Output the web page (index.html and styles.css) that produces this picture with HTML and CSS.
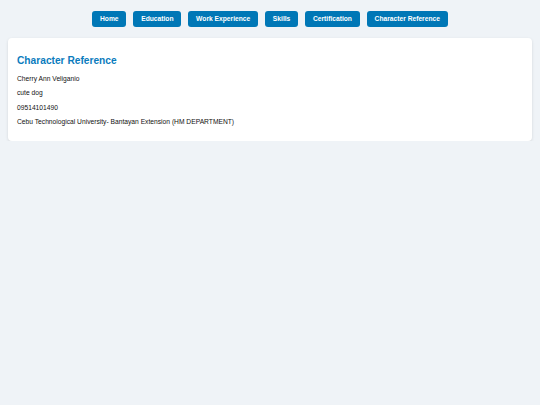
FILE: index.html
```html
<!DOCTYPE html>
<html>
<head>
<meta charset="utf-8">
<link rel="stylesheet" href="styles.css">
</head>
<body>
<nav class="nav">
  <a class="btn">Home</a>
  <a class="btn">Education</a>
  <a class="btn">Work Experience</a>
  <a class="btn">Skills</a>
  <a class="btn">Certification</a>
  <a class="btn">Character Reference</a>
</nav>
<section class="card">
  <h2 class="title">Character Reference</h2>
  <p class="line">Cherry Ann Veliganio</p>
  <p class="line">cute dog</p>
  <p class="line">09514101490</p>
  <p class="line">Cebu Technological University- Bantayan Extension (HM DEPARTMENT)</p>
</section>
</body>
</html>
```
FILE: styles.css
```css
html, body {
  margin: 0;
  padding: 0;
}
body {
  background: #eff3f7;
  font-family: "Liberation Sans", Arial, sans-serif;
  color: #111;
  padding: 11px 8px 0;
}
.nav {
  display: flex;
  justify-content: center;
  gap: 7px;
}
.btn {
  display: block;
  background: #0077b6;
  color: #fff;
  font-weight: bold;
  font-size: 6.7px;
  line-height: 16px;
  height: 16px;
  padding: 0 7.8px;
  border-radius: 3px;
}
.card {
  margin-top: 11px;
  background: #fff;
  border-radius: 4px;
  box-shadow: 0 1px 3px rgba(0, 0, 0, 0.12);
  padding: 16px 9px 12px;
}
.title {
  margin: 0 0 4px;
  color: #0a7bbd;
  font-size: 10.2px;
  line-height: 14px;
}
.line {
  margin: 0;
  font-size: 6.7px;
  line-height: 14.3px;
}
```
